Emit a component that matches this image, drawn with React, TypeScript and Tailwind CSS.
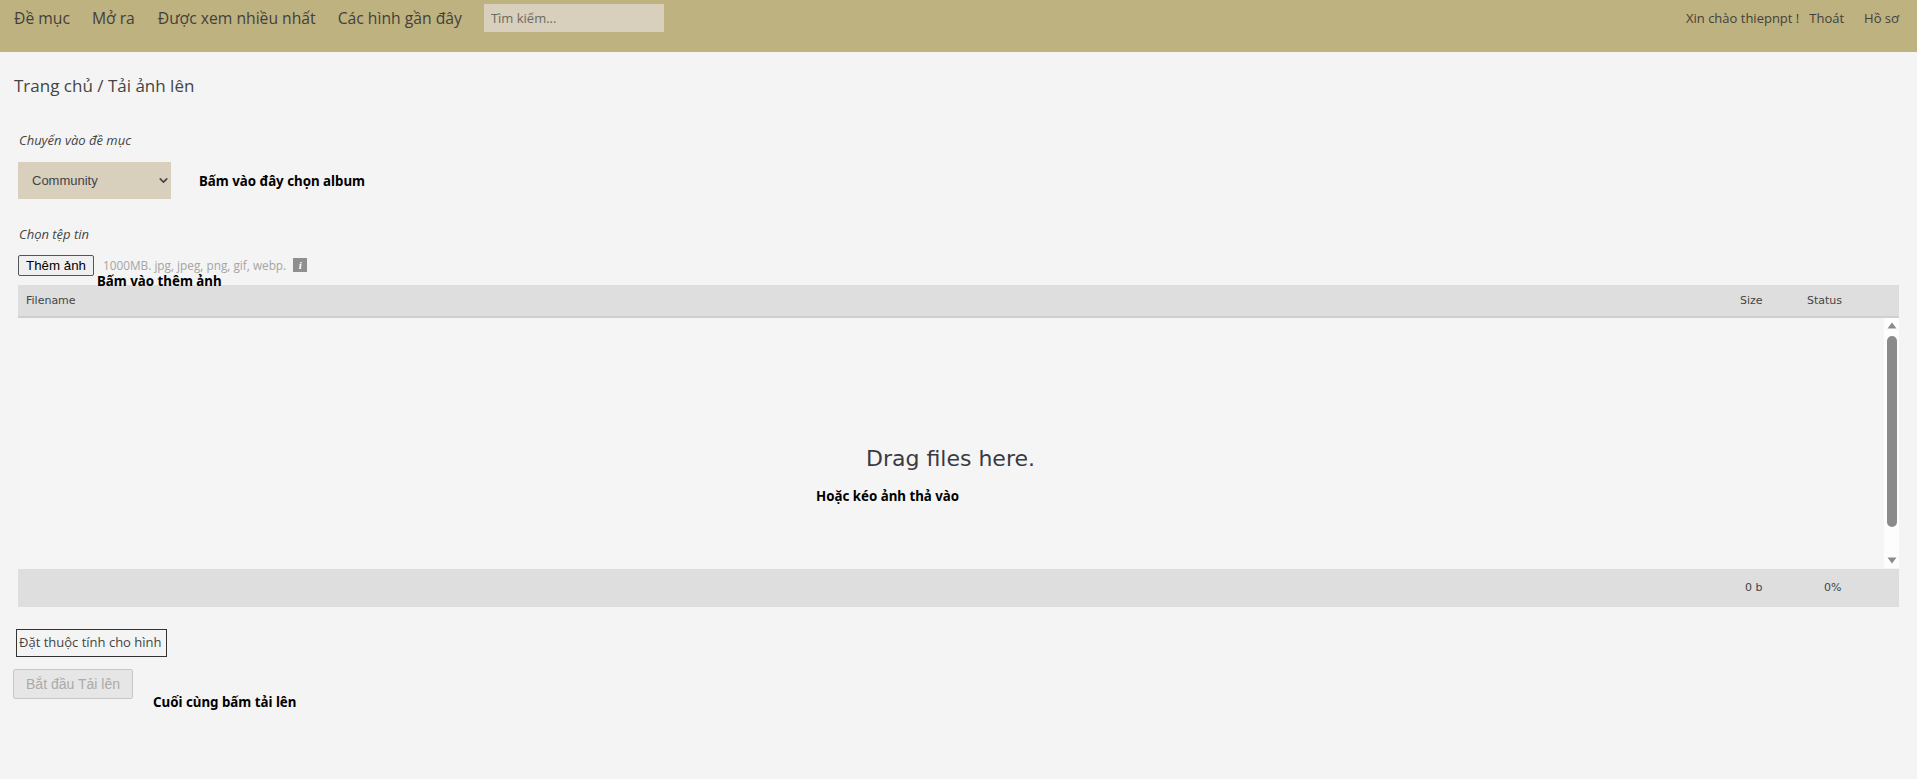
import { ChevronDown } from 'lucide-react';

const navItems = [
  { label: 'Đề mục', className: 'ml-[14px]' },
  { label: 'Mở ra', className: 'ml-[22px]' },
  { label: 'Được xem nhiều nhất', className: 'ml-[23px]' },
  { label: 'Các hình gần đây', className: 'ml-[22px]' },
];

const note = "font-['Noto_Sans',sans-serif] text-[13.3px] font-bold leading-[18px] text-black";

function Header() {
  return (
    <header className="flex h-[52px] items-start justify-between bg-[#bdb280] text-[#443f3a]">
      <nav className="flex items-center pt-[3px]">
        {navItems.map((item) => (
          <a key={item.label} className={`${item.className} text-[15.7px] leading-[26px]`}>
            {item.label}
          </a>
        ))}
        <input
          placeholder="Tìm kiếm..."
          className="ml-[22px] mt-[1px] h-[28px] w-[180px] bg-[#d8cfbc] pl-[7px] pr-[6px] text-[13px] outline-none placeholder:text-[#6e6a60]"
        />
      </nav>
      <div className="flex pt-[9px] pr-[18px] text-[13px] leading-[18px]">
        <span>Xin chào thiepnpt !</span>
        <a className="ml-[10px]">Thoát</a>
        <a className="ml-[20px]">Hồ sơ</a>
      </div>
    </header>
  );
}

function Scrollbar() {
  return (
    <div className="flex w-[15px] flex-col items-center bg-[#fdfdfd] pt-[4px]">
      <svg width="10" height="7" viewBox="0 0 10 7" className="fill-[#8b8b8b]">
        <path d="M5 0.5 L9.5 6.5 L0.5 6.5 Z" />
      </svg>
      <div className="mt-[7px] h-[191px] w-[10px] rounded-full bg-[#8b8b8b]" />
      <svg width="10" height="7" viewBox="0 0 10 7" className="mt-[30px] fill-[#8b8b8b]">
        <path d="M0.5 0.5 L9.5 0.5 L5 6.5 Z" />
      </svg>
    </div>
  );
}

function Uploader() {
  return (
    <div className="ml-[18px] mr-[18px] font-['DejaVu_Sans',sans-serif] text-[#444]">
      <div className="flex h-[33px] items-center border-b-2 border-[#cfcfcf] bg-[#dedede] pr-[35px] pt-[1px] text-[11px]">
        <span className="ml-[8px] flex-1">Filename</span>
        <span className="w-[67px]">Size</span>
        <span className="w-[57px]">Status</span>
      </div>
      <div className="flex h-[250px] bg-[#f5f5f5]">
        <div className="relative flex-1">
          <div className="pt-[128px] pr-[1px] text-center text-[22px] leading-[26px] text-[#3a3a44]">
            Drag files here.
          </div>
          <span className={`absolute top-[169px] left-[798px] ${note}`}>Hoặc kéo ảnh thả vào</span>
        </div>
        <Scrollbar />
      </div>
      <div className="mt-[1px] flex h-[38px] items-center justify-end bg-[#dedede] text-[11px]">
        <span className="w-[79px]">0 b</span>
        <span className="w-[75px]">0%</span>
      </div>
    </div>
  );
}

export default function App() {
  return (
    <div className="min-h-[779px] bg-[#f4f4f4] font-['Open_Sans',sans-serif]">
      <Header />
      <h1 className="ml-[14px] mt-[22px] text-[17px] font-normal leading-[24px] text-[#444]">
        Trang chủ / Tải ảnh lên
      </h1>

      <p className="ml-[19px] mt-[33px] text-[13px] italic leading-[18px] text-[#444]">Chuyển vào đề mục</p>
      <div className="ml-[18px] mt-[13px] flex items-center">
        <div className="flex h-[37px] w-[153px] items-center justify-between bg-[#d8cfbc] pl-[14px] pr-[1px] font-['Liberation_Sans',sans-serif] text-[13px] text-[#444]">
          <span>Community</span>
          <ChevronDown size={13} strokeWidth={3} />
        </div>
        <span className={`ml-[28px] ${note}`}>Bấm vào đây chọn album</span>
      </div>

      <p className="ml-[19px] mt-[26px] text-[13px] italic leading-[18px] text-[#444]">Chọn tệp tin</p>
      <div className="relative ml-[18px] mt-[12px] flex h-[30px] items-start">
        <button className="h-[21px] w-[76px] rounded-[2px] border border-[#555] bg-[#f0f0f0] font-['Liberation_Sans',sans-serif] text-[13.3px] leading-[17px] text-black">
          Thêm ảnh
        </button>
        <span className="ml-[9px] mt-[1px] text-[11.8px] leading-[19px] text-[#a5a5a5]">1000MB. jpg, jpeg, png, gif, webp.</span>
        <span className="ml-[7px] mt-[3px] flex h-[14px] w-[14px] items-center justify-center bg-[#8f8f8f] font-['Liberation_Serif',serif] text-[11px] font-bold italic leading-none text-white">
          i
        </span>
        <span className={`absolute top-[17px] left-[79px] z-10 ${note}`}>Bấm vào thêm ảnh</span>
      </div>

      <Uploader />

      <div className="ml-[16px] mt-[22px] flex h-[28px] w-[151px] items-center border border-[#333] pl-[2px] text-[13px] text-[#444]">
        Đặt thuộc tính cho hình
      </div>
      <div className="mt-[12px] flex items-start">
        <button className="ml-[13px] h-[30px] w-[120px] rounded-[2px] border border-[#c8c8c8] bg-[#e6e6e6] font-['Liberation_Sans',sans-serif] text-[14px] text-[#aaa]">
          Bắt đầu Tải lên
        </button>
        <span className={`ml-[20px] mt-[24px] ${note}`}>Cuối cùng bấm tải lên</span>
      </div>
    </div>
  );
}
